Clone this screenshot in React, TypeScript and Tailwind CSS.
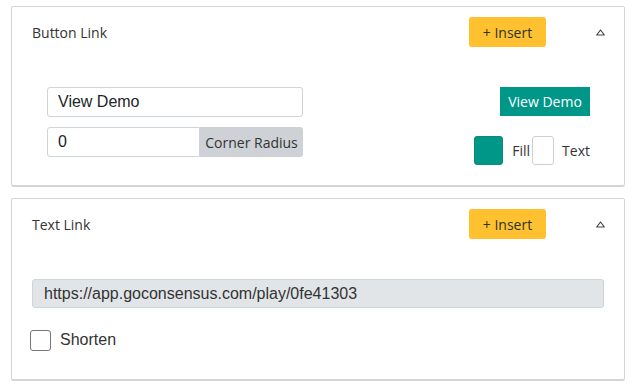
import { useState } from "react"

function ChevronUp() {
  return (
    <svg width="9" height="7" viewBox="0 0 9 7" className="block">
      <polygon points="4.5,1 8.3,6 0.7,6" fill="none" stroke="#444" strokeWidth="1.2" strokeLinejoin="round" />
    </svg>
  );
}

function CardHeader({ title }: { title: string }) {
  return (
    <div className="flex items-center pt-[10px] pl-[20px] pr-[19px]">
      <span className="flex-1 text-[14px] text-[#333] font-['Open_Sans',sans-serif]">{title}</span>
      <button className="h-[30px] w-[77px] rounded-[3px] bg-[#ffc12f] text-[14px] text-[#2b3320] font-['Open_Sans',sans-serif] mr-[50px]">
        + Insert
      </button>
      <ChevronUp />
    </div>
  );
}

function App() {
  const [label, setLabel] = useState("View Demo");
  const [radius, setRadius] = useState("0");
  const [shorten, setShorten] = useState(false);

  return (
    <div className="w-[635px] h-[386px] bg-white pt-[6px] pl-[11px] pr-[10px]">
      <div className="border border-[#d3d6d9] rounded-[2px] shadow-[0_1px_0_#d3d6d9] pb-[20px]">
        <CardHeader title="Button Link" />
        <div className="flex justify-between mt-[40px] pl-[35px] pr-[34px]">
          <div className="flex flex-col gap-[10px] w-[256px]">
            <input
              value={label}
              onChange={(e) => setLabel(e.target.value)}
              className="h-[30px] border border-[#ced4da] rounded-[3px] px-[10px] text-[16px] text-[#212529] font-['Liberation_Sans',sans-serif] outline-none"
            />
            <div className="flex h-[30px]">
              <input
                value={radius}
                onChange={(e) => setRadius(e.target.value)}
                className="w-[153px] border border-[#ced4da] rounded-l-[3px] px-[10px] text-[16px] text-[#212529] font-['Liberation_Sans',sans-serif] outline-none"
              />
              <span className="flex-1 flex items-center justify-center bg-[#ced1d5] rounded-r-[3px] text-[14px] text-[#333] font-['Open_Sans',sans-serif]">
                Corner Radius
              </span>
            </div>
          </div>
          <div className="flex flex-col items-end">
            <button className="h-[29px] w-[90px] bg-[#009688] text-white text-[14px] font-['Open_Sans',sans-serif]">
              View Demo
            </button>
            <div className="flex items-center mt-[20px] text-[14px] text-[#333] font-['Open_Sans',sans-serif]">
              <span className="w-[29px] h-[29px] rounded-[3px] bg-[#009688] border border-[#0a8a7d]" />
              <span className="ml-[9px]">Fill</span>
              <span className="ml-[2px] w-[22px] h-[29px] rounded-[3px] bg-white border border-[#ccd0d4]" />
              <span className="ml-[8px]">Text</span>
            </div>
          </div>
        </div>
      </div>

      <div className="mt-[12px] border border-[#d3d6d9] rounded-[2px] shadow-[0_1px_0_#d3d6d9] pb-[27px]">
        <CardHeader title="Text Link" />
        <div className="mt-[40px] px-[20px]">
          <div className="h-[29px] flex items-center bg-[#e2e5e8] border border-[#ced4da] rounded-[3px] px-[11px] text-[16px] text-[#333] font-['Liberation_Sans',sans-serif]">
            https://app.goconsensus.com/play/0fe41303
          </div>
          <label className="flex items-center mt-[20px] -ml-[2px] text-[16px] text-[#333] font-['Liberation_Sans',sans-serif]">
            <input
              type="checkbox"
              checked={shorten}
              onChange={(e) => setShorten(e.target.checked)}
              className="appearance-none w-[21px] h-[21px] border border-[#767676] rounded-[3px] bg-white checked:bg-[#009688]"
            />
            <span className="ml-[9px]">Shorten</span>
          </label>
        </div>
      </div>
    </div>
  );
}

export default App;
